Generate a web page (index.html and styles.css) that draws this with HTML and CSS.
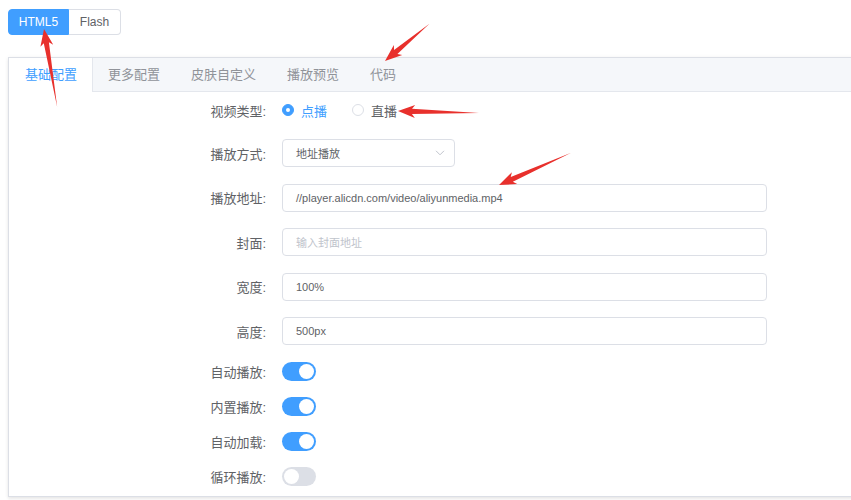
FILE: index.html
```html
<!DOCTYPE html>
<html lang="zh">
<head>
<meta charset="utf-8">
<title>播放器配置</title>
<link rel="stylesheet" href="styles.css">
</head>
<body>
<div class="page">
  <div class="btn-group">
    <button class="btn btn-active">HTML5</button>
    <button class="btn">Flash</button>
  </div>

  <div class="card">
    <div class="tabs">
      <div class="tab tab-active">基础配置</div>
      <div class="tab">更多配置</div>
      <div class="tab">皮肤自定义</div>
      <div class="tab">播放预览</div>
      <div class="tab">代码</div>
    </div>

    <div class="form">
      <div class="row row-radio">
        <label class="label">视频类型:</label>
        <div class="radios">
          <span class="radio checked"><span class="dot"></span>点播</span>
          <span class="radio"><span class="dot"></span>直播</span>
        </div>
      </div>
      <div class="row row-input">
        <label class="label">播放方式:</label>
        <div class="select">
          <span>地址播放</span>
          <svg class="chev" width="10" height="6" viewBox="0 0 10 6"><path d="M1 0.8 L5 4.8 L9 0.8" fill="none" stroke="#c0c4cc" stroke-width="1"/></svg>
        </div>
      </div>
      <div class="row row-input">
        <label class="label">播放地址:</label>
        <div class="input">//player.alicdn.com/video/aliyunmedia.mp4</div>
      </div>
      <div class="row row-input">
        <label class="label">封面:</label>
        <div class="input placeholder">输入封面地址</div>
      </div>
      <div class="row row-input">
        <label class="label">宽度:</label>
        <div class="input">100%</div>
      </div>
      <div class="row row-input">
        <label class="label">高度:</label>
        <div class="input">500px</div>
      </div>
      <div class="row row-switch">
        <label class="label">自动播放:</label>
        <span class="switch on"><span class="knob"></span></span>
      </div>
      <div class="row row-switch">
        <label class="label">内置播放:</label>
        <span class="switch on"><span class="knob"></span></span>
      </div>
      <div class="row row-switch">
        <label class="label">自动加载:</label>
        <span class="switch on"><span class="knob"></span></span>
      </div>
      <div class="row row-switch last">
        <label class="label">循环播放:</label>
        <span class="switch"><span class="knob"></span></span>
      </div>
    </div>
  </div>

  <svg class="arrows" width="851" height="500" viewBox="0 0 851 500">
    <g fill="#e8302c">
      <path transform="translate(44 29) rotate(-99.6)" d="M-79 0 L-14 2.6 L-17 6.5 L0 0 L-17 -6.5 L-14 -2.6 Z"/>
      <path transform="translate(385 61) rotate(140)" d="M-58 0 L-14 2.6 L-17 6.5 L0 0 L-17 -6.5 L-14 -2.6 Z"/>
      <path transform="translate(398 111) rotate(181.4)" d="M-81 0 L-14 2.6 L-17 6.5 L0 0 L-17 -6.5 L-14 -2.6 Z"/>
      <path transform="translate(499 185) rotate(156)" d="M-79 0 L-14 2.6 L-17 6.5 L0 0 L-17 -6.5 L-14 -2.6 Z"/>
    </g>
  </svg>
</div>
</body>
</html>
```

FILE: styles.css
```css
html, body {
  margin: 0;
  padding: 0;
  background: #ffffff;
  overflow: hidden;
}

body {
  width: 851px;
  height: 500px;
  font-family: "Liberation Sans", Arial, "Noto Sans CJK SC", sans-serif;
  color: #606266;
}

.page {
  position: relative;
  padding: 9px 0 0 8px;
  height: 500px;
  box-sizing: border-box;
}

.btn-group {
  display: flex;
  height: 26px;
}

.btn {
  font-family: "Liberation Sans", Arial, sans-serif;
  font-size: 12px;
  height: 26px;
  margin: 0;
  padding: 0;
  border: 1px solid #dcdfe6;
  background: #ffffff;
  color: #606266;
  width: 52px;
  border-radius: 0 4px 4px 0;
  border-left: none;
}

.btn-active {
  width: 61px;
  background: #409eff;
  border-color: #409eff;
  color: #ffffff;
  border-radius: 4px 0 0 4px;
  border-left: 1px solid #409eff;
}

.card {
  margin-top: 22px;
  width: 870px;
  height: 440px;
  box-sizing: border-box;
  border: 1px solid #dcdfe6;
  background: #ffffff;
  box-shadow: 0 2px 3px rgba(0, 0, 0, 0.08), 0 0 5px rgba(0, 0, 0, 0.04);
}

.tabs {
  display: flex;
  height: 34px;
  background: #f5f7fa;
  border-bottom: 1px solid #e4e7ed;
  box-sizing: border-box;
}

.tab {
  font-family: "Liberation Sans", Arial, "Noto Sans CJK SC", sans-serif;
  font-size: 13px;
  line-height: 33px;
  padding: 0 15px;
  color: #909399;
  border-right: 1px solid transparent;
}

.tab-active {
  padding: 0 15px 0 16px;
  background: #ffffff;
  color: #409eff;
  border-right: 1px solid #e4e7ed;
  height: 34px;
  box-sizing: border-box;
}

.form {
  padding: 4px 0 0 153px;
}

.row {
  display: flex;
  align-items: center;
}

.row-radio {
  height: 28px;
  margin-bottom: 15px;
}

.row-input {
  height: 28px;
  margin-bottom: 16.5px;
}

.row-switch {
  height: 20px;
  margin-bottom: 15px;
}

.label {
  width: 120px;
  box-sizing: border-box;
  padding-right: 16px;
  text-align: right;
  font-size: 13px;
  color: #606266;
  font-family: "Liberation Sans", Arial, "Noto Sans CJK SC", sans-serif;
}

.radios {
  display: flex;
  align-items: center;
  font-size: 13px;
}

.radio {
  display: flex;
  align-items: center;
  color: #606266;
  margin-right: 25px;
}

.radio .dot {
  width: 12px;
  height: 12px;
  box-sizing: border-box;
  border: 1px solid #dcdfe6;
  border-radius: 50%;
  background: #ffffff;
  margin-right: 7px;
  position: relative;
}

.radio.checked {
  color: #409eff;
}

.radio.checked .dot {
  border-color: #409eff;
  background: #409eff;
}

.radio.checked .dot::after {
  content: "";
  position: absolute;
  left: 3px;
  top: 3px;
  width: 4px;
  height: 4px;
  border-radius: 50%;
  background: #ffffff;
}

.select,
.input {
  height: 28px;
  box-sizing: border-box;
  border: 1px solid #dcdfe6;
  border-radius: 4px;
  padding: 0 13px;
  font-size: 11px;
  color: #606266;
  display: flex;
  align-items: center;
  background: #ffffff;
}

.select {
  width: 173px;
  justify-content: space-between;
  padding-right: 9px;
}

.input {
  width: 485px;
}

.placeholder {
  color: #c0c4cc;
}

.switch {
  width: 34px;
  height: 19px;
  border-radius: 10px;
  background: #dcdfe6;
  display: flex;
  align-items: center;
  padding: 0 2px;
  box-sizing: border-box;
}

.switch.on {
  background: #409eff;
  justify-content: flex-end;
}

.knob {
  width: 15px;
  height: 15px;
  border-radius: 50%;
  background: #ffffff;
}

.arrows {
  position: absolute;
  left: 0;
  top: 0;
  pointer-events: none;
}
```
